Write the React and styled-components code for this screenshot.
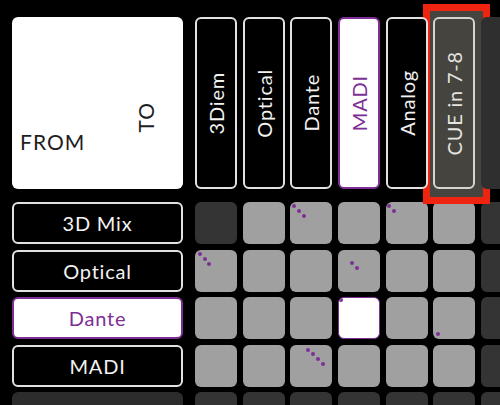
import React from "react";
import styled, {createGlobalStyle, css} from "styled-components";

const PURPLE = "#7d2f95";

const GlobalStyle = createGlobalStyle`
    html, body {
        margin: 0;
        padding: 0;
        background: #000;
        height: 405px;
        overflow: hidden;
    }
    * {
        box-sizing: border-box;
    }
`;

const Page = styled.div`
    display: flex;
    gap: 12px;
    padding: 17px 0 0 12px;
    font-family: "Lato", "Open Sans", sans-serif;
    font-weight: 400;
    width: 560px;
`;

const LeftCol = styled.div`
    display: flex;
    flex-direction: column;
    width: 171px;
    flex-shrink: 0;
`;

const Corner = styled.div`
    height: 172px;
    margin-bottom: 13px;
    background: #fff;
    border-radius: 6px;
    display: flex;
    justify-content: space-between;
    align-items: flex-end;
    padding: 0 27px 37px 8px;
    color: #1e1e1e;
    font-size: 21px;
    letter-spacing: 1px;
`;

const CornerFrom = styled.span`
    line-height: 1;
`;

const CornerTo = styled.span`
    writing-mode: vertical-rl;
    transform: rotate(180deg);
    line-height: 1;
    margin-bottom: 19px;
`;

const LabelList = styled.div`
    display: flex;
    flex-direction: column;
    gap: 5.5px;
`;

const Label = styled.div`
    height: 42px;
    flex-shrink: 0;
    border-radius: 6px;
    border: 2px solid #e2e2e2;
    background: #000;
    color: #f2f2f2;
    display: flex;
    align-items: center;
    justify-content: center;
    font-size: 20px;
    letter-spacing: 0.8px;
    ${p => p.$active && css`
        background: #fff;
        border-color: ${PURPLE};
        color: ${PURPLE};
    `}
    ${p => p.$disabled && css`
        background: #2c2c2c;
        border-color: #2c2c2c;
        color: #555;
    `}
`;

const RightCol = styled.div`
    display: flex;
    flex-direction: column;
    flex-shrink: 0;
`;

const HeaderRow = styled.div`
    display: flex;
    gap: 5.67px;
    height: 172px;
    margin-bottom: 13px;
`;

const HeaderSlot = styled.div`
    position: relative;
    width: 42px;
    flex-shrink: 0;
    display: flex;
`;

const HeaderCell = styled.div`
    position: relative;
    z-index: 3;
    flex: 1;
    border-radius: 6px;
    border: 2px solid #e2e2e2;
    background: #000;
    color: #f2f2f2;
    display: flex;
    align-items: center;
    justify-content: center;
    font-size: 20px;
    letter-spacing: 0.8px;
    ${p => p.$active && css`
        background: #fff;
        border-color: ${PURPLE};
        color: ${PURPLE};
    `}
    ${p => p.$cue && css`
        background: #45443f;
        border-color: #d6d6d0;
        color: #e4e4e0;
    `}
    ${p => p.$disabled && css`
        background: #2f2f2f;
        border-color: #2f2f2f;
    `}
`;

const Vertical = styled.span`
    writing-mode: vertical-rl;
    transform: rotate(180deg);
    white-space: nowrap;
    line-height: 1;
`;

const Highlight = styled.div`
    position: absolute;
    z-index: 2;
    top: -13px;
    bottom: -15px;
    left: -10px;
    right: -15px;
    border: 7px solid #ee2410;
    background: #45443f;
`;

const Grid = styled.div`
    display: grid;
    grid-template-columns: repeat(7, 42px);
    grid-auto-rows: 42px;
    column-gap: 5.67px;
    row-gap: 5.5px;
`;

const Cell = styled.div`
    border-radius: 6px;
    background: #a0a0a0;
    overflow: hidden;
    ${p => p.$off && css`
        background: #343434;
    `}
    ${p => p.$sel && css`
        background: #fff;
        border: 1.5px solid ${PURPLE};
    `}
`;

const columns = ["3Diem", "Optical", "Dante", "MADI", "Analog", "CUE in 7-8", ""];
const rows = ["3D Mix", "Optical", "Dante", "MADI", "Analog"];

// dot offsets (centres) inside a cell, keyed "row-col"
const dots = {
    "0-2": [[4, 4], [9, 9], [14, 14]],
    "0-4": [[3, 4], [8, 9]],
    "1-0": [[5, 4], [10, 9], [14, 14]],
    "1-3": [[14, 13], [19, 18]],
    "2-3": [[3, 3]],
    "2-5": [[5, 37]],
    "3-2": [[18, 5], [23, 9], [28, 14], [33, 19]],
};

const cellState = (r, c) => {
    if (r === 4 || c === 6) return "off";
    if (r === 0 && c === 0) return "off";
    if (r === 2 && c === 3) return "sel";
    return "on";
};

const Dots = ({points}) => (
    <svg width="42" height="42" viewBox="0 0 42 42" style={{display: "block"}}>
        {points.map(([x, y], i) => (
            <circle key={i} cx={x} cy={y} r="2" fill={PURPLE}/>
        ))}
    </svg>
);

export default function App() {
    return (
        <>
            <GlobalStyle/>
            <Page>
                <LeftCol>
                    <Corner>
                        <CornerFrom>FROM</CornerFrom>
                        <CornerTo>TO</CornerTo>
                    </Corner>
                    <LabelList>
                        {rows.map((name, i) => (
                            <Label key={i} $active={i === 2} $disabled={i === 4}>
                                {i === 4 ? "" : name}
                            </Label>
                        ))}
                    </LabelList>
                </LeftCol>
                <RightCol>
                    <HeaderRow>
                        {columns.map((name, i) => (
                            <HeaderSlot key={i}>
                                {i === 5 && <Highlight/>}
                                <HeaderCell $active={i === 3} $cue={i === 5} $disabled={i === 6}>
                                    <Vertical>{name}</Vertical>
                                </HeaderCell>
                            </HeaderSlot>
                        ))}
                    </HeaderRow>
                    <Grid>
                        {rows.map((_, r) => columns.map((__, c) => {
                            const state = cellState(r, c);
                            const pts = dots[`${r}-${c}`];
                            return (
                                <Cell key={`${r}-${c}`} $off={state === "off"} $sel={state === "sel"}>
                                    {pts && <Dots points={state === "sel" ? pts.map(([x, y]) => [x - 1, y - 1]) : pts}/>}
                                </Cell>
                            );
                        }))}
                    </Grid>
                </RightCol>
            </Page>
        </>
    );
}
